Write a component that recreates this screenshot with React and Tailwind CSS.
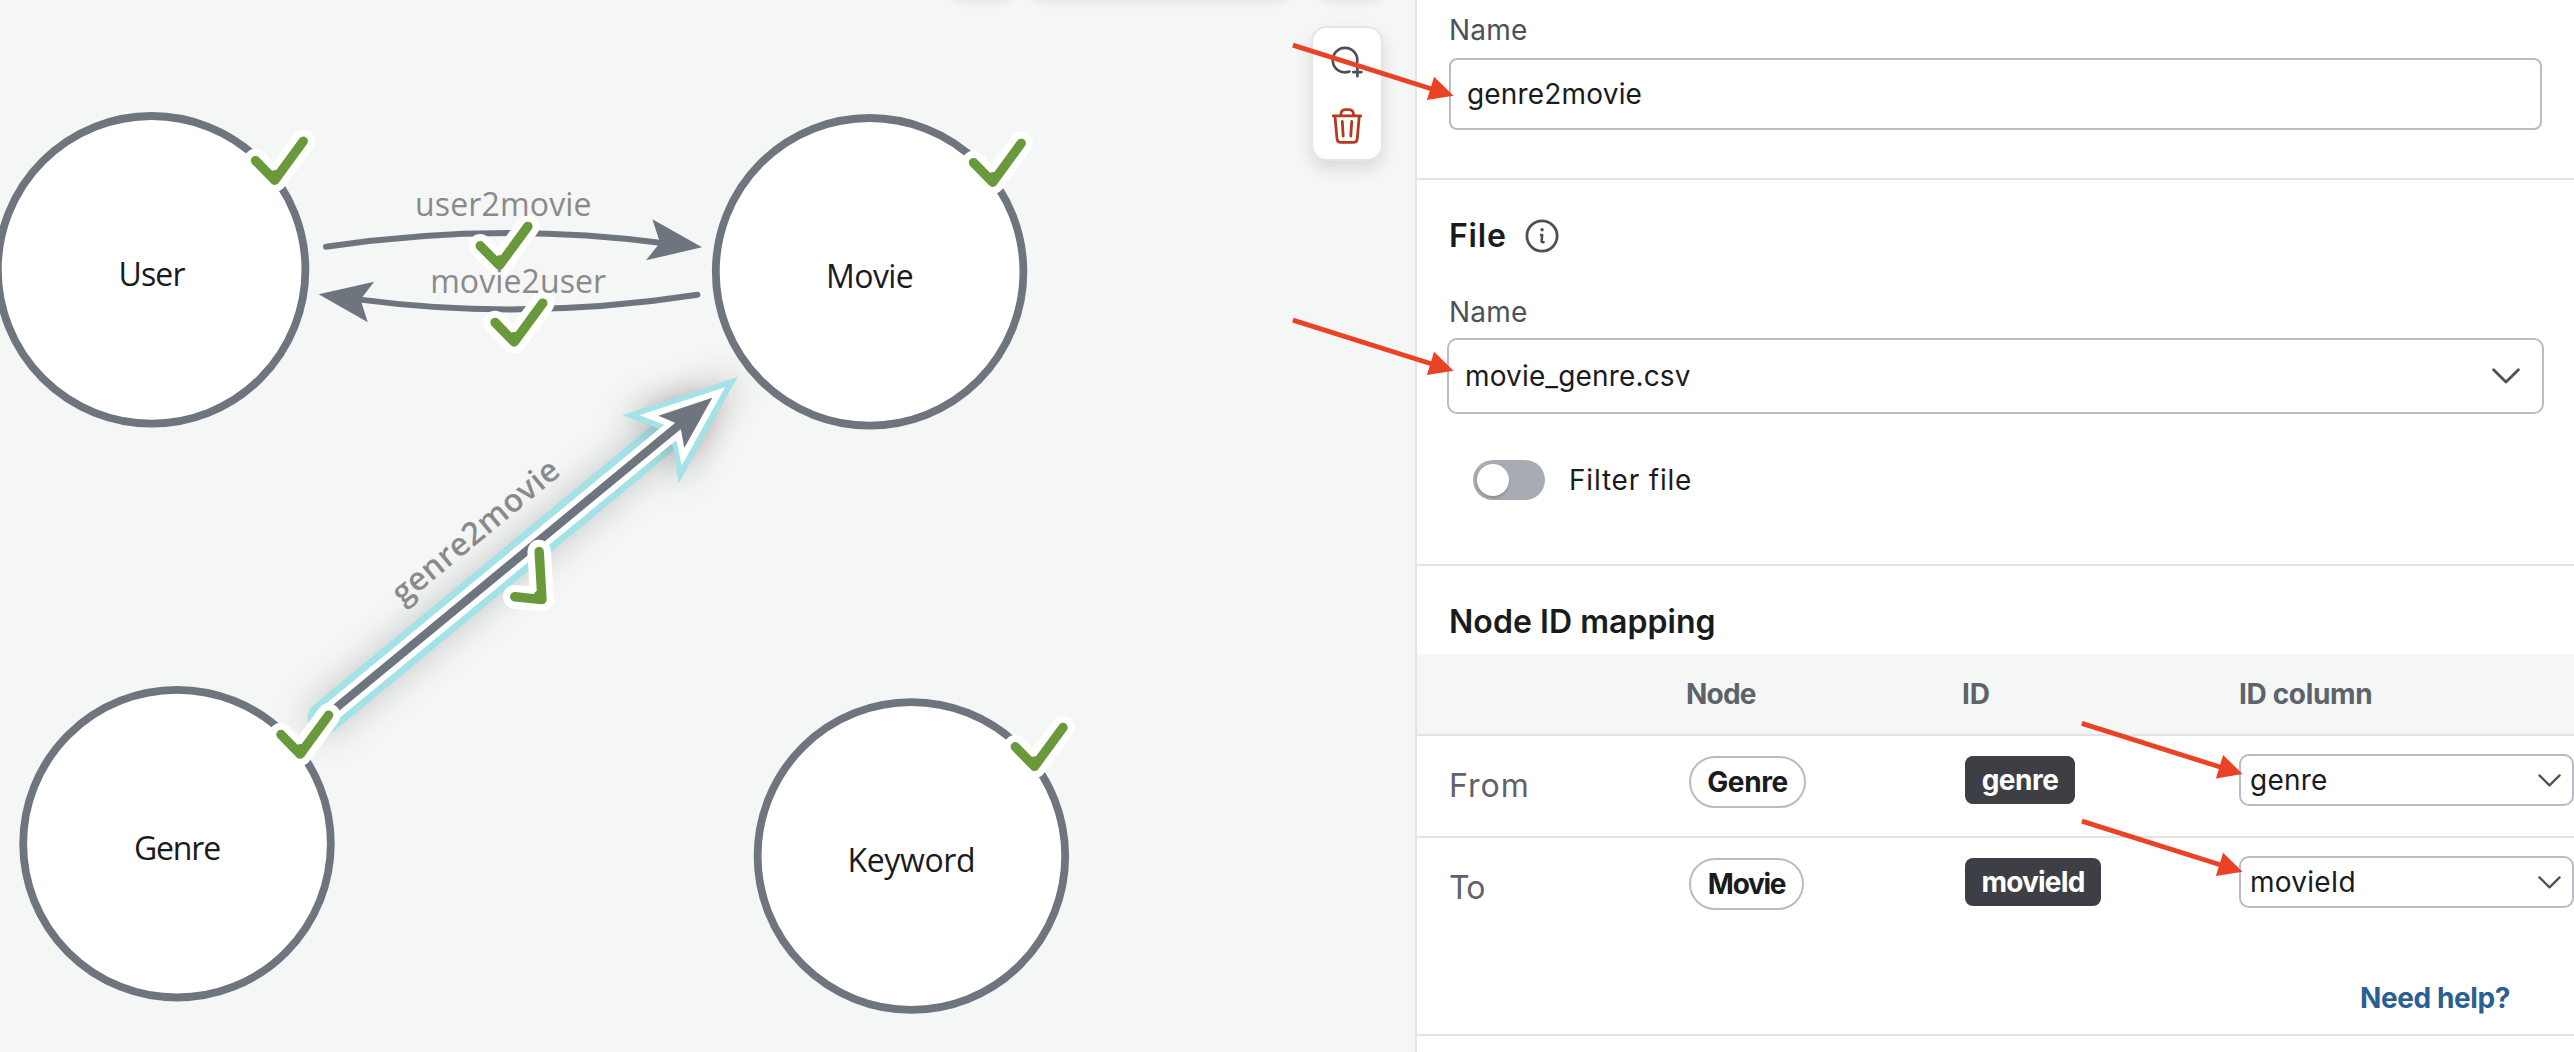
const nodes = [
  { label: "User", x: 151.6, y: 269.8, baseline: 16.4, tracking: "-0.9px" },
  { label: "Movie", x: 869.6, y: 271.8, baseline: 16.2, tracking: "-0.6px" },
  { label: "Genre", x: 177, y: 843.7, baseline: 16.6, tracking: "-1.2px" },
  { label: "Keyword", x: 911.4, y: 856, baseline: 16, tracking: "-0.35px" },
];

function Check({ x, y, angle = 0 }) {
  const d = "M-19.2 -19.6L0 0L28.5 -38.9";
  return (
    <g transform={`translate(${x} ${y}) rotate(${angle})`} fill="none" strokeLinecap="round" strokeLinejoin="round">
      <path d={d} stroke="#ffffff" strokeWidth="23.5" />
      <path d={d} stroke="#69993b" strokeWidth="9.4" />
      <path d="M-5.5 -6.5Q-1 -12 5 -8L0 -1Z" fill="#69993b" stroke="#69993b" strokeWidth="1" />
    </g>
  );
}

function Graph() {
  const font = "font-['Open_Sans','Noto_Sans',sans-serif] text-[32px]";
  return (
    <svg className="block h-full w-full" viewBox="0 0 1415 1052" fill="none">
      <defs>
        <filter id="glow" filterUnits="userSpaceOnUse" x="180" y="280" width="680" height="560">
          <feGaussianBlur stdDeviation="17" />
        </filter>
      </defs>

      {/* selected relationship */}
      <path d="M324 718L685 420" stroke="#2a1c1c" strokeOpacity="0.21" strokeWidth="33" strokeLinecap="round" filter="url(#glow)" />
      <path d="M324 718L672 430.5" stroke="#a3e2e7" strokeWidth="33" strokeLinecap="round" />
      <path d="M737.7 376.7L622.3 415.3L660 430L672.5 444.5L678.7 483.3Z" fill="#2a1c1c" fillOpacity="0.28" filter="url(#glow)" />
      <path d="M737.7 376.7L622.3 415.3L657.5 428.3L673 446.5L678.7 483.3Z" fill="#a3e2e7" />
      <path d="M324 718L678 426" stroke="#ffffff" strokeWidth="19.5" strokeLinecap="round" />
      <path d="M725 387.3L639.3 415.3L664.3 424.8L677 442.7L681.7 465.7Z" fill="#ffffff" />
      <path d="M336 708.1L684 421" stroke="#6f757e" strokeWidth="8.4" />
      <path d="M712.3 397.7L658.3 415.7L675 422.7L681 430L684.3 448Z" fill="#6f757e" />

      {/* relationships between User and Movie */}
      <g stroke="#6f757e" strokeWidth="6" strokeLinecap="round">
        <path d="M326 246.7Q497 221 664 243.2" />
        <path d="M697.5 294.8Q525 321.5 358 299.4" />
      </g>
      <path d="M702 247.3L652.4 219.3L660 242.7L646 260.3Z" fill="#6f757e" />
      <path d="M318.6 294.3L374.2 281.7L360.5 299.5L367.8 322.3Z" fill="#6f757e" />

      {nodes.map((n) => (
        <g key={n.label}>
          <circle cx={n.x} cy={n.y} r="153.8" fill="#ffffff" stroke="#6f757e" strokeWidth="7.8" />
          <text x={n.x} y={n.y + n.baseline} textAnchor="middle" fill="#1a1b1d" letterSpacing={n.tracking} className={font}>
            {n.label}
          </text>
        </g>
      ))}

      <Check x={499.4} y={265.3} />
      <Check x={514.2} y={342} />
      <Check x={542} y={599.6} angle={-39.6} />
      {nodes.map((n) => (
        <Check key={n.label} x={n.x + 123.1} y={n.y - 89.6} />
      ))}

      <g fill="#8a8a8a" textAnchor="middle" className={font}>
        <text x="503.4" y="216" letterSpacing="0.15px">user2movie</text>
        <text x="518.2" y="292.7" letterSpacing="0.1px">movie2user</text>
        <text transform="translate(482.5 539.6) rotate(-39.6)" letterSpacing="0.5px" className="font-semibold">
          genre2movie
        </text>
      </g>
    </svg>
  );
}

function Toolbox() {
  return (
    <div className="absolute left-[1311px] top-[26px] flex h-[135px] w-[72px] flex-col items-center rounded-2xl border-2 border-[#e4e6e7] bg-white shadow-[0_8px_16px_rgba(20,25,30,0.12)]">
      <svg className="mt-3 h-11 w-11 shrink-0" viewBox="1325 40 44 44" fill="none" stroke="#4d5157" strokeWidth="2.7" strokeLinecap="round">
        <path d="M1349.4 71.6A12.3 12.3 0 1 1 1357.2 62" />
        <path d="M1357.4 68v8.2M1353.2 72.1h8.2" />
      </svg>
      <svg className="mt-5 h-11 w-11 shrink-0" viewBox="1325 104 44 44" fill="none" stroke="#b43a1e" strokeWidth="2.8" strokeLinecap="round" strokeLinejoin="round">
        <path d="M1333.3 115.9H1360.8" />
        <path d="M1340.8 115.3C1340.8 111.5 1342.4 109.7 1345.4 109.7H1349C1352 109.7 1353.6 111.5 1353.6 115.3" />
        <path d="M1335 116.5L1337 138.6Q1337.3 142.4 1341 142.4H1353.3Q1357 142.4 1357.3 138.6L1359.2 116.5" />
        <path d="M1342.3 121.4L1343.2 136M1351.7 121.4L1350.8 136" />
      </svg>
    </div>
  );
}

function Chevron({ className }) {
  return (
    <svg className={className} viewBox="0 0 28 16" fill="none" stroke="#4d5157" strokeWidth="2.8" strokeLinecap="round" strokeLinejoin="round">
      <path d="M1.6 1.7L14 14L26.4 1.7" />
    </svg>
  );
}

const rows = [
  { side: "From", track: "tracking-[1px]", node: "Genre", nodeTrack: "tracking-[-0.4px]", pill: "w-[117px]", id: "genre", idTrack: "tracking-[-0.5px]", tag: "w-[110px]", border: "border-b-2" },
  { side: "To", track: "tracking-[-0.8px]", node: "Movie", nodeTrack: "tracking-[-1.3px]", pill: "w-[115px]", id: "movieId", idTrack: "tracking-[-0.8px]", tag: "w-[136px]", border: "" },
];

const columns = "grid grid-cols-[237px_276px_277px_1fr] pl-8";

function Panel() {
  return (
    <div className="h-[1052px] w-[1159px] shrink-0 overflow-hidden border-l-2 border-[#e2e3e5] bg-white text-[28px] leading-7 text-[#1a1b1d]">
      <section className="h-[180px] border-b-2 border-[#e2e3e5] pl-8 pr-8 pt-4">
        <div className="tracking-[0.2px] text-[#4d5157]">Name</div>
        <div className="mt-[14px] flex h-[72px] w-[1093px] items-center rounded-lg border-2 border-[#bbbcc3] pb-px pl-4 tracking-[0.18px]">
          genre2movie
        </div>
      </section>

      <section className="h-[386px] border-b-2 border-[#e2e3e5] pl-8 pt-10">
        <div className="flex h-8 items-center">
          <h2 className="w-[76px] text-[32px] font-semibold leading-8 tracking-[0.8px]">File</h2>
          <svg className="h-[34px] w-[34px]" viewBox="-17 -17 34 34" fill="none" stroke="#4d5157" strokeWidth="2.8">
            <circle r="15.1" />
            <path d="M-2 -1.1H0.2L-0.4 5.6Q-0.4 6.4 2.6 6.1" strokeWidth="2.5" strokeLinejoin="round" />
            <circle cx="0.1" cy="-6.2" r="1.7" fill="#4d5157" stroke="none" />
          </svg>
        </div>
        <div className="mt-[46px] tracking-[0.2px] text-[#4d5157]">Name</div>
        <div className="-ml-0.5 mt-3 flex h-[76px] w-[1097px] items-center justify-between rounded-[10px] border-2 border-[#bbbcc3] pl-4 pr-[22px] tracking-[0.15px]">
          <span>movie_genre.csv</span>
          <Chevron className="h-4 w-7" />
        </div>
        <div className="ml-6 mt-[46px] flex h-10 items-center gap-6">
          <div className="flex h-10 w-[72px] items-center rounded-full bg-[#a8acb2] p-1">
            <div className="h-8 w-8 rounded-full bg-white shadow-[0_2px_3px_rgba(0,0,0,0.18)]" />
          </div>
          <span className="tracking-[0.8px]">Filter file</span>
        </div>
      </section>

      <section className="h-[470px] border-b-2 border-[#e2e3e5] pt-10">
        <h2 className="pl-8 text-[32px] font-semibold leading-8 tracking-[0.05px]">Node ID mapping</h2>
        <div className={`${columns} mt-4 h-[82px] items-center border-b-2 border-[#e2e3e5] bg-[#f5f7f6] font-bold text-[#5e636a]`}>
          <span />
          <span className="tracking-[-0.8px]">Node</span>
          <span>ID</span>
          <span className="tracking-[-0.33px]">ID column</span>
        </div>
        {rows.map((r) => (
          <div key={r.side} className={`${columns} h-[102px] items-start border-[#e2e3e5] ${r.border}`}>
            <span className={`mt-[34px] text-[32px] leading-8 text-[#5e636a] ${r.track}`}>{r.side}</span>
            <div className={`ml-[3px] mt-5 flex h-[52px] items-center justify-center rounded-full border-2 border-[#bbbcc3] font-bold ${r.pill} ${r.nodeTrack}`}>
              {r.node}
            </div>
            <div className={`ml-[3px] mt-5 flex h-12 items-center justify-center rounded-lg bg-[#3e3f45] font-bold text-white ${r.tag} ${r.idTrack}`}>
              {r.id}
            </div>
            <div className="mt-[18px] flex h-[52px] w-[335px] items-center justify-between rounded-[10px] border-2 border-[#bbbcc3] pl-[9px] pr-[11px] tracking-[0.22px]">
              <span>{r.id}</span>
              <Chevron className="h-[13px] w-[23px]" />
            </div>
          </div>
        ))}
        <div className="flex justify-end pr-16 pt-11 font-bold tracking-[-0.4px] text-[#295f91]">
          Need help?
        </div>
      </section>
    </div>
  );
}

/* Tip positions of the annotation arrows. */
const callouts = [
  [1453.5, 95.7],
  [1453.5, 370.7],
  [2242.5, 774],
  [2242.5, 871.7],
];

export default function App() {
  return (
    <div className="relative flex h-[1052px] w-[2574px] overflow-hidden bg-[#f5f7f6] font-['Inter',sans-serif]">
      <div className="relative h-[1052px] w-[1415px] shrink-0">
        <Graph />
        <div className="absolute -top-10 left-[947px] flex h-10 gap-3">
          <div className="w-[69px] rounded-2xl bg-white shadow-[0_3px_8px_rgba(20,25,30,0.07)]" />
          <div className="w-[264px] rounded-2xl bg-white shadow-[0_3px_8px_rgba(20,25,30,0.07)]" />
          <div className="ml-3 w-[69px] rounded-2xl bg-white shadow-[0_3px_8px_rgba(20,25,30,0.07)]" />
        </div>
        <Toolbox />
      </div>
      <Panel />
      <svg className="pointer-events-none absolute inset-0 h-[1052px] w-[2574px]" viewBox="0 0 2574 1052">
        {callouts.map(([x, y]) => (
          <g key={`${x}-${y}`} transform={`translate(${x} ${y})`} fill="#eb4225" stroke="#eb4225">
            <path d="M-160.6 -50.6L-20 -6.2" strokeWidth="4.8" />
            <path d="M0 0L-19.4 -19L-26.6 4.4Z" stroke="none" />
          </g>
        ))}
      </svg>
    </div>
  );
}
